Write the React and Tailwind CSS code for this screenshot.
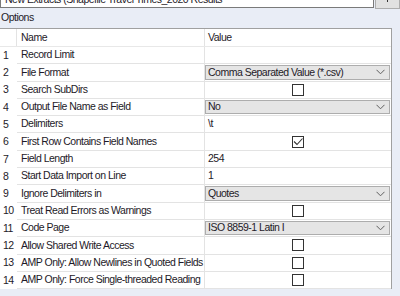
import React from 'react';

const rows = [
  { name: 'Record Limit', type: 'text', value: '' },
  { name: 'File Format', type: 'select', value: 'Comma Separated Value (*.csv)' },
  { name: 'Search SubDirs', type: 'check', value: false },
  { name: 'Output File Name as Field', type: 'select', value: 'No' },
  { name: 'Delimiters', type: 'text', value: '\\t' },
  { name: 'First Row Contains Field Names', type: 'check', value: true },
  { name: 'Field Length', type: 'text', value: '254' },
  { name: 'Start Data Import on Line', type: 'text', value: '1' },
  { name: 'Ignore Delimiters in', type: 'select', value: 'Quotes' },
  { name: 'Treat Read Errors as Warnings', type: 'check', value: false },
  { name: 'Code Page', type: 'select', value: 'ISO 8859-1 Latin I' },
  { name: 'Allow Shared Write Access', type: 'check', value: false },
  { name: 'AMP Only: Allow Newlines in Quoted Fields', type: 'check', value: false },
  { name: 'AMP Only: Force Single-threaded Reading', type: 'check', value: false },
];

function Checkbox({ checked }) {
  return (
    <div className="w-[12px] h-[12px] border border-[#333333] bg-white flex items-center justify-center">
      {checked && (
        <svg width="10" height="10" viewBox="0 0 10 10">
          <path d="M1 4.5 L4 7.5 L9.5 1.5" fill="none" stroke="#333333" strokeWidth="1.1" />
        </svg>
      )}
    </div>
  );
}

function ValueCell({ row }) {
  if (row.type === 'select') {
    return (
      <div className="h-full w-full py-px pr-px">
        <div className="h-full flex items-center justify-between bg-[#e5e5e5] border border-[#adadad] pl-[2px] pr-[4px]">
          <span>{row.value}</span>
          <svg width="9" height="6" viewBox="0 0 9 6">
            <path d="M0.5 0.8 L4.5 4.8 L8.5 0.8" fill="none" stroke="#606060" strokeWidth="1" />
          </svg>
        </div>
      </div>
    );
  }
  if (row.type === 'check') {
    return (
      <div className="h-full w-full flex items-center justify-center">
        <Checkbox checked={row.value} />
      </div>
    );
  }
  return <div className="h-full flex items-center pl-[3px]">{row.value}</div>;
}

export default function App() {
  return (
    <div
      className="w-[400px] h-[296px] overflow-hidden bg-[#e9edf6] text-[10.5px] tracking-[-0.5px] text-[#1e1a28]"
      style={{ fontFamily: '"Liberation Sans", Arial, sans-serif' }}
    >
      <div className="flex h-[9px]">
        <div className="flex-1 h-[8px] bg-white border border-t-0 border-[#7a7a7a] overflow-hidden">
          <div className="-mt-[7px] pl-[4px] leading-[13px] whitespace-nowrap">
            New Extracts (Shapefile Travel Times_2020 Results
          </div>
        </div>
        <div className="w-[25px] h-[9px] ml-px bg-[#e1e1e1] border border-t-0 border-[#adadad] flex justify-center">
          <div className="w-px h-[2px] bg-[#333333]" />
        </div>
      </div>

      <div className="h-[17px] flex items-center pl-px">Options</div>

      <div className="w-[392px] bg-white border-t border-r border-[#a0a0a0] mt-[2px]">
        <div className="flex h-[18px] border-b border-[#e8e8e8]">
          <div className="w-[17px] border-r border-[#e3e3e3]" />
          <div className="w-[188px] flex items-center pl-[4px] border-r border-[#e3e3e3]">Name</div>
          <div className="flex-1 flex items-center pl-[3px]">Value</div>
        </div>
        {rows.map((row, i) => (
          <div key={i} className="flex h-[17.3px]">
            <div className="w-[17px] flex items-center pl-[3px]">{i + 1}</div>
            <div className="w-[188px] flex items-center pl-[4px] border-r border-b border-[#e3e3e3] whitespace-nowrap">
              {row.name}
            </div>
            <div className="flex-1 border-b border-[#e3e3e3]">
              <ValueCell row={row} />
            </div>
          </div>
        ))}
      </div>
    </div>
  );
}
